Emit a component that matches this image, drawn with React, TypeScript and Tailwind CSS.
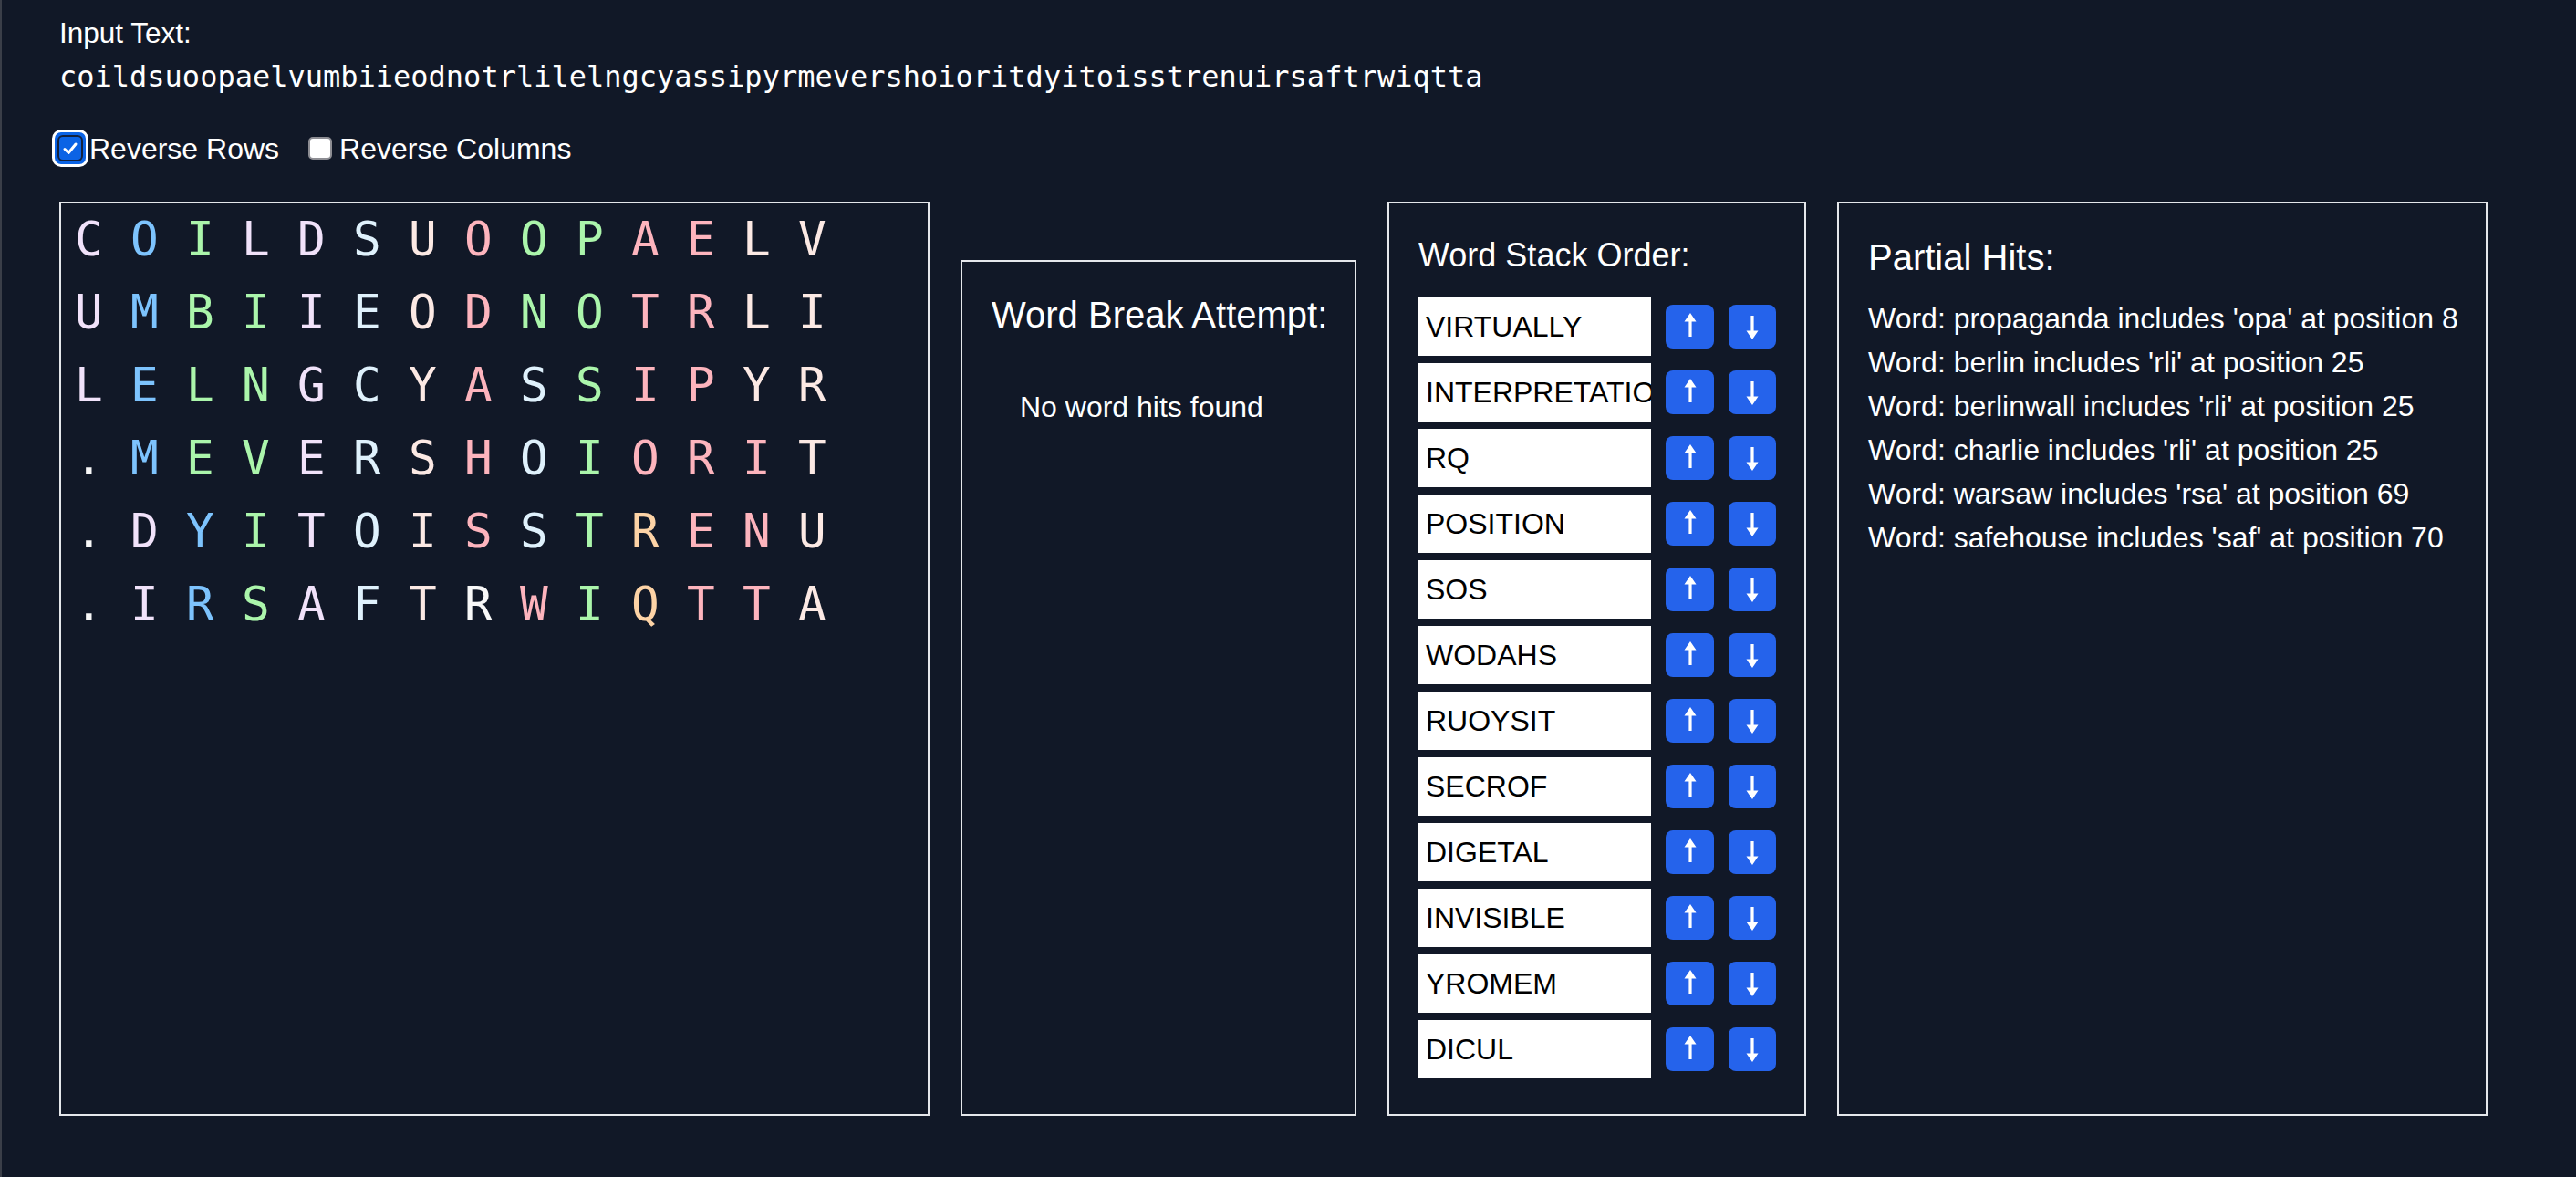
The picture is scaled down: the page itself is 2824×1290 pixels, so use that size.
import React from "react"

const INPUT = "coildsuoopaelvumbiieodnotrlilelngcyassipyrmevershoioritdyitoisstrenuirsaftrwiqtta"

// letter colours of the cipher grid
const palette: Record<string, string> = {
  l: "text-[#f1e2fa]",
  b: "text-[#7dc3fd]",
  g: "text-[#abf5ab]",
  p: "text-[#fdb4bd]",
  e: "text-[#fce9e4]",
  c: "text-[#dff1fc]",
  o: "text-[#fdd3a6]",
  w: "text-[#f8f8f8]",
}

const grid: [string, string][] = [
  ["COILDSUOOPAELV", "lbgllcepggppee"],
  ["UMBIIEODNOTRLI", "lbgglcepggppee"],
  ["LELNGCYASSIPYR", "lbgglcepcgppee"],
  [".MEVERSHOIORIT", "wbgglcepcgpppe"],
  [".DYITOISSTRENU", "wlbglcepcgoppe"],
  [".IRSAFTRWIQTTA", "wlbglcewpgoppe"],
]

const words = [
  "VIRTUALLY",
  "INTERPRETATION",
  "RQ",
  "POSITION",
  "SOS",
  "WODAHS",
  "RUOYSIT",
  "SECROF",
  "DIGETAL",
  "INVISIBLE",
  "YROMEM",
  "DICUL",
]

const hits = [
  "Word: propaganda includes 'opa' at position 8",
  "Word: berlin includes 'rli' at position 25",
  "Word: berlinwall includes 'rli' at position 25",
  "Word: charlie includes 'rli' at position 25",
  "Word: warsaw includes 'rsa' at position 69",
  "Word: safehouse includes 'saf' at position 70",
]

function UpArrow() {
  return (
    <svg width="16" height="28" viewBox="0 0 16 28" className="-translate-y-[2px]">
      <path d="M8 1 L14.5 10.5 H9.6 V27 H6.4 V10.5 H1.5 Z" fill="white" />
    </svg>
  )
}

function DownArrow() {
  return (
    <svg width="16" height="28" viewBox="0 0 16 28" className="translate-y-[1px]">
      <path d="M8 27 L14.5 17.5 H9.6 V1 H6.4 V17.5 H1.5 Z" fill="white" />
    </svg>
  )
}

export default function App() {
  return (
    <div className="min-h-screen w-full border-l-2 border-[#3a3e48] bg-[#111827] pl-[63px] pt-[18px] font-['Liberation_Sans',Arial,sans-serif] text-white">
      {/* Input */}
      <div className="text-[31.5px] leading-[36px]">Input Text:</div>
      <div className="mt-[10px] font-['DejaVu_Sans_Mono',monospace] text-[32px] leading-[40px]">{INPUT}</div>

      {/* Toggles */}
      <div className="mt-[38px] flex h-[41px] items-center text-[32px]">
        <span className="-ml-[8px] flex h-[41px] w-[40px] items-center justify-center rounded-[10px] border-[3px] border-white bg-[#0b63e5]">
          <span className="flex h-[29px] w-[28px] items-center justify-center rounded-[6px] border-2 border-[#13213d] bg-[#0b63e5]">
            <svg width="18" height="18" viewBox="0 0 18 18">
              <path d="M3 9.5 L7.2 13.5 L15 4" fill="none" stroke="white" strokeWidth="3" strokeLinecap="round" strokeLinejoin="round" />
            </svg>
          </span>
        </span>
        <span className="ml-[1px]">Reverse Rows</span>
        <span className="ml-[32px] h-[25px] w-[26px] rounded-[5px] border-2 border-[#8d8d93] bg-white" />
        <span className="ml-[8px]">Reverse Columns</span>
      </div>

      {/* Panels */}
      <div className="mt-[38px] flex h-[1002px] items-stretch gap-[34px]">
        {/* Grid */}
        <div className="w-[954px] border-2 border-[#e5e7eb] pl-[15px] font-['DejaVu_Sans_Mono',monospace] text-[51px] leading-[80px]">
          {grid.map(([row, cols], r) => (
            <div key={r} className="flex">
              {row.split("").map((ch, i) => (
                <span key={i} className={`inline-block w-[61px] ${palette[cols[i]]}`}>
                  {ch}
                </span>
              ))}
            </div>
          ))}
        </div>

        {/* Word break */}
        <div className="mt-[64px] w-[434px] border-2 border-[#e5e7eb] pl-[32px] pr-[16px] pt-[35px]">
          <h3 className="whitespace-nowrap text-[40px] leading-[46px]">Word Break Attempt:</h3>
          <p className="mt-[54px] pl-[31px] text-[32px] leading-[48px]">No word hits found</p>
        </div>

        {/* Word stack */}
        <div className="w-[459px] border-2 border-[#e5e7eb] pl-[31px] pt-[36px]">
          <h3 className="ml-[1px] text-[36px] leading-[42px]">Word Stack Order:</h3>
          <div className="mt-[25px] flex flex-col gap-[8px]">
            {words.map((w) => (
              <div key={w} className="flex h-[64px] items-center gap-[16px]">
                <div className="flex h-[64px] w-[256px] items-center overflow-hidden whitespace-nowrap bg-white pl-[9px] text-[32px] text-black">
                  {w}
                </div>
                <button className="flex h-[48px] w-[53px] items-center justify-center rounded-[8px] bg-[#2563eb]">
                  <UpArrow />
                </button>
                <button className="flex h-[48px] w-[52px] items-center justify-center rounded-[8px] bg-[#2563eb]">
                  <DownArrow />
                </button>
              </div>
            ))}
          </div>
        </div>

        {/* Partial hits */}
        <div className="w-[713px] border-2 border-[#e5e7eb] pl-[32px] pt-[36px]">
          <h3 className="text-[40px] leading-[46px]">Partial Hits:</h3>
          <div className="mt-[20px] text-[32px] leading-[48px]">
            {hits.map((h) => (
              <div key={h}>{h}</div>
            ))}
          </div>
        </div>
      </div>
    </div>
  )
}
